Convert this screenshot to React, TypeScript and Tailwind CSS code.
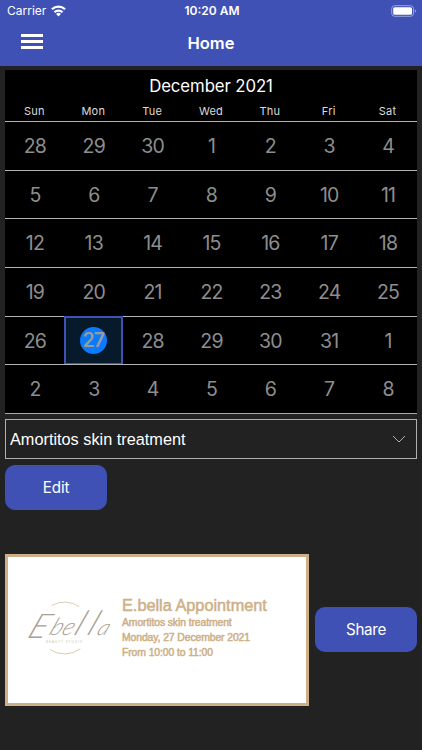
import clsx from "clsx";

const weekdays = ["Sun", "Mon", "Tue", "Wed", "Thu", "Fri", "Sat"];

const weeks = [
  [28, 29, 30, 1, 2, 3, 4],
  [5, 6, 7, 8, 9, 10, 11],
  [12, 13, 14, 15, 16, 17, 18],
  [19, 20, 21, 22, 23, 24, 25],
  [26, 27, 28, 29, 30, 31, 1],
  [2, 3, 4, 5, 6, 7, 8],
];

function StatusBar() {
  return (
    <div className="flex h-[22px] items-center justify-between pl-[7px] pr-[5px] text-[12px]">
      <div className="flex flex-1 items-center gap-[5px]">
        <span>Carrier</span>
        <svg className="h-[12px] w-[15px]" viewBox="0 0 16 12" fill="none" stroke="white" strokeWidth="2.4">
          <path d="M1 4.2a10 10 0 0 1 14 0" />
          <path d="M3.7 7.4a6.1 6.1 0 0 1 8.6 0" />
          <path d="M8 11.8 5.4 9.3a3.6 3.6 0 0 1 5.2 0Z" fill="white" stroke="none" />
        </svg>
      </div>
      <span className="text-[12px] font-semibold">10:20 AM</span>
      <div className="flex flex-1 justify-end">
        <svg className="h-[12px] w-[26px]" viewBox="0 0 26 12">
          <rect x="0.7" y="0.7" width="21.8" height="10.6" rx="3" fill="none" stroke="#9ba4da" strokeWidth="1" />
          <rect x="2.2" y="2.2" width="18.8" height="7.6" rx="1.6" fill="white" />
          <path d="M23.8 4.2c1.6.6 1.6 3 0 3.6Z" fill="#9ba4da" />
        </svg>
      </div>
    </div>
  );
}

function NavBar() {
  return (
    <div className="grid h-[44px] grid-cols-[1fr_auto_1fr] items-center pb-px">
      <button className="mb-[4px] ml-[21px] flex w-[22px] flex-col gap-[3px]" aria-label="Menu">
        <span className="h-[3px] w-full bg-white" />
        <span className="h-[3px] w-full bg-white" />
        <span className="h-[3px] w-full bg-white" />
      </button>
      <h1 className="text-[16.5px] font-semibold">Home</h1>
    </div>
  );
}

function Calendar() {
  return (
    <section className="bg-black">
      <h2 className="h-[33px] text-center text-[16.8px] leading-[33px] tracking-[-0.1px] text-white">December 2021</h2>
      <div className="grid h-[18px] grid-cols-7 text-center text-[11px] leading-[17px] tracking-[0.2px] text-[#dcdcdc]">
        {weekdays.map((day) => (
          <span key={day}>{day}</span>
        ))}
      </div>
      <div className="grid h-[293px] grid-rows-6 border-b border-[#a8a8a8]">
        {weeks.map((week, w) => (
          <div key={w} className="grid grid-cols-7 border-t border-[#b4b4b4]">
            {week.map((day, d) => {
              const selected = w === 4 && d === 1;
              return (
                <div
                  key={d}
                  className={clsx(
                    "flex items-center justify-center text-[19.5px]",
                    selected
                      ? "-mt-px -mb-px border-2 border-[#3f51b5] bg-[#061a2c] font-semibold tracking-[-0.9px] text-[#9b9b9b]"
                      : "pt-[1.5px] pl-px tracking-[-0.8px] text-[#8e8e8e]"
                  )}
                >
                  {selected ? (
                    <span className="flex size-[27px] items-center justify-center rounded-full bg-[#0a7aff]">{day}</span>
                  ) : (
                    day
                  )}
                </div>
              );
            })}
          </div>
        ))}
      </div>
    </section>
  );
}

function Logo() {
  return (
    <svg className="h-[60px] w-[92px] overflow-visible" viewBox="0 0 92 60">
      <g fill="none" stroke="#d8c7a8" strokeWidth="0.9" strokeLinecap="round">
        <path d="M30 5.2A26 26 0 0 1 57 6.4" />
        <path d="M28 49.6A26 26 0 0 0 58 49" />
      </g>
      <g className="font-[Lato,'Liberation_Sans',sans-serif] font-light italic" fill="#aaa08f">
        <text transform="translate(4 38) skewX(-24)">
          <tspan fontSize="34">E</tspan>
        </text>
        <text transform="translate(26 35) skewX(-24)">
          <tspan fontSize="24">be</tspan>
          <tspan fontSize="34" dx="1" letterSpacing="6">ll</tspan>
          <tspan fontSize="22" dx="-3">a</tspan>
        </text>
      </g>
      <text x="24" y="43" fontSize="3" textLength="36" fill="#c9bfb0">
        BEAUTY STUDIO
      </text>
    </svg>
  );
}

function AppointmentCard() {
  return (
    <div className="flex h-[152px] w-[304px] items-center border-[3px] border-[#cdb087] bg-white pl-[14px] font-['Liberation_Sans',Arial,sans-serif] text-[#cdb087]">
      <Logo />
      <div className="-mt-[6px] ml-[8px] whitespace-nowrap [-webkit-text-stroke:0.5px_#cdb087]">
        <h3 className="text-[16.3px] leading-[20px]">E.bella Appointment</h3>
        <p className="text-[10.4px] leading-[15px] tracking-[-0.1px]">Amortitos skin treatment</p>
        <p className="text-[10.4px] leading-[15px] tracking-[-0.1px]">Monday, 27 December 2021</p>
        <p className="text-[10.4px] leading-[15px] tracking-[-0.1px]">From 10:00 to 11:00</p>
      </div>
    </div>
  );
}

export default function App() {
  return (
    <div className="h-[750px] w-[422px] overflow-hidden bg-[#222222] font-[Inter,'Liberation_Sans',sans-serif] text-white">
      <header className="bg-[#3f51b5]">
        <StatusBar />
        <NavBar />
      </header>
      <main className="px-[5px] pt-[4px]">
        <Calendar />
        <div className="mt-[5px] flex h-[40px] items-center justify-between border border-[#b0b0b0] pl-[4px] pr-[10px]">
          <span className="pt-px font-['Liberation_Sans',Arial,sans-serif] text-[16.3px]">Amortitos skin treatment</span>
          <svg className="h-[8px] w-[14px]" viewBox="0 0 14 8" fill="none" stroke="#b0b0b0" strokeWidth="1">
            <path d="m1 1 6 6 6-6" />
          </svg>
        </div>
        <button className="mt-[6px] h-[45px] w-[102px] rounded-[10px] bg-[#3f51b5] pt-[2px] text-[15.2px] tracking-[-0.1px]">
          Edit
        </button>
        <div className="mt-[44px] flex items-center justify-between">
          <AppointmentCard />
          <button className="mb-px h-[45px] w-[102px] rounded-[10px] bg-[#3f51b5] pt-px text-[15.2px] tracking-[-0.3px]">
            Share
          </button>
        </div>
      </main>
    </div>
  );
}
